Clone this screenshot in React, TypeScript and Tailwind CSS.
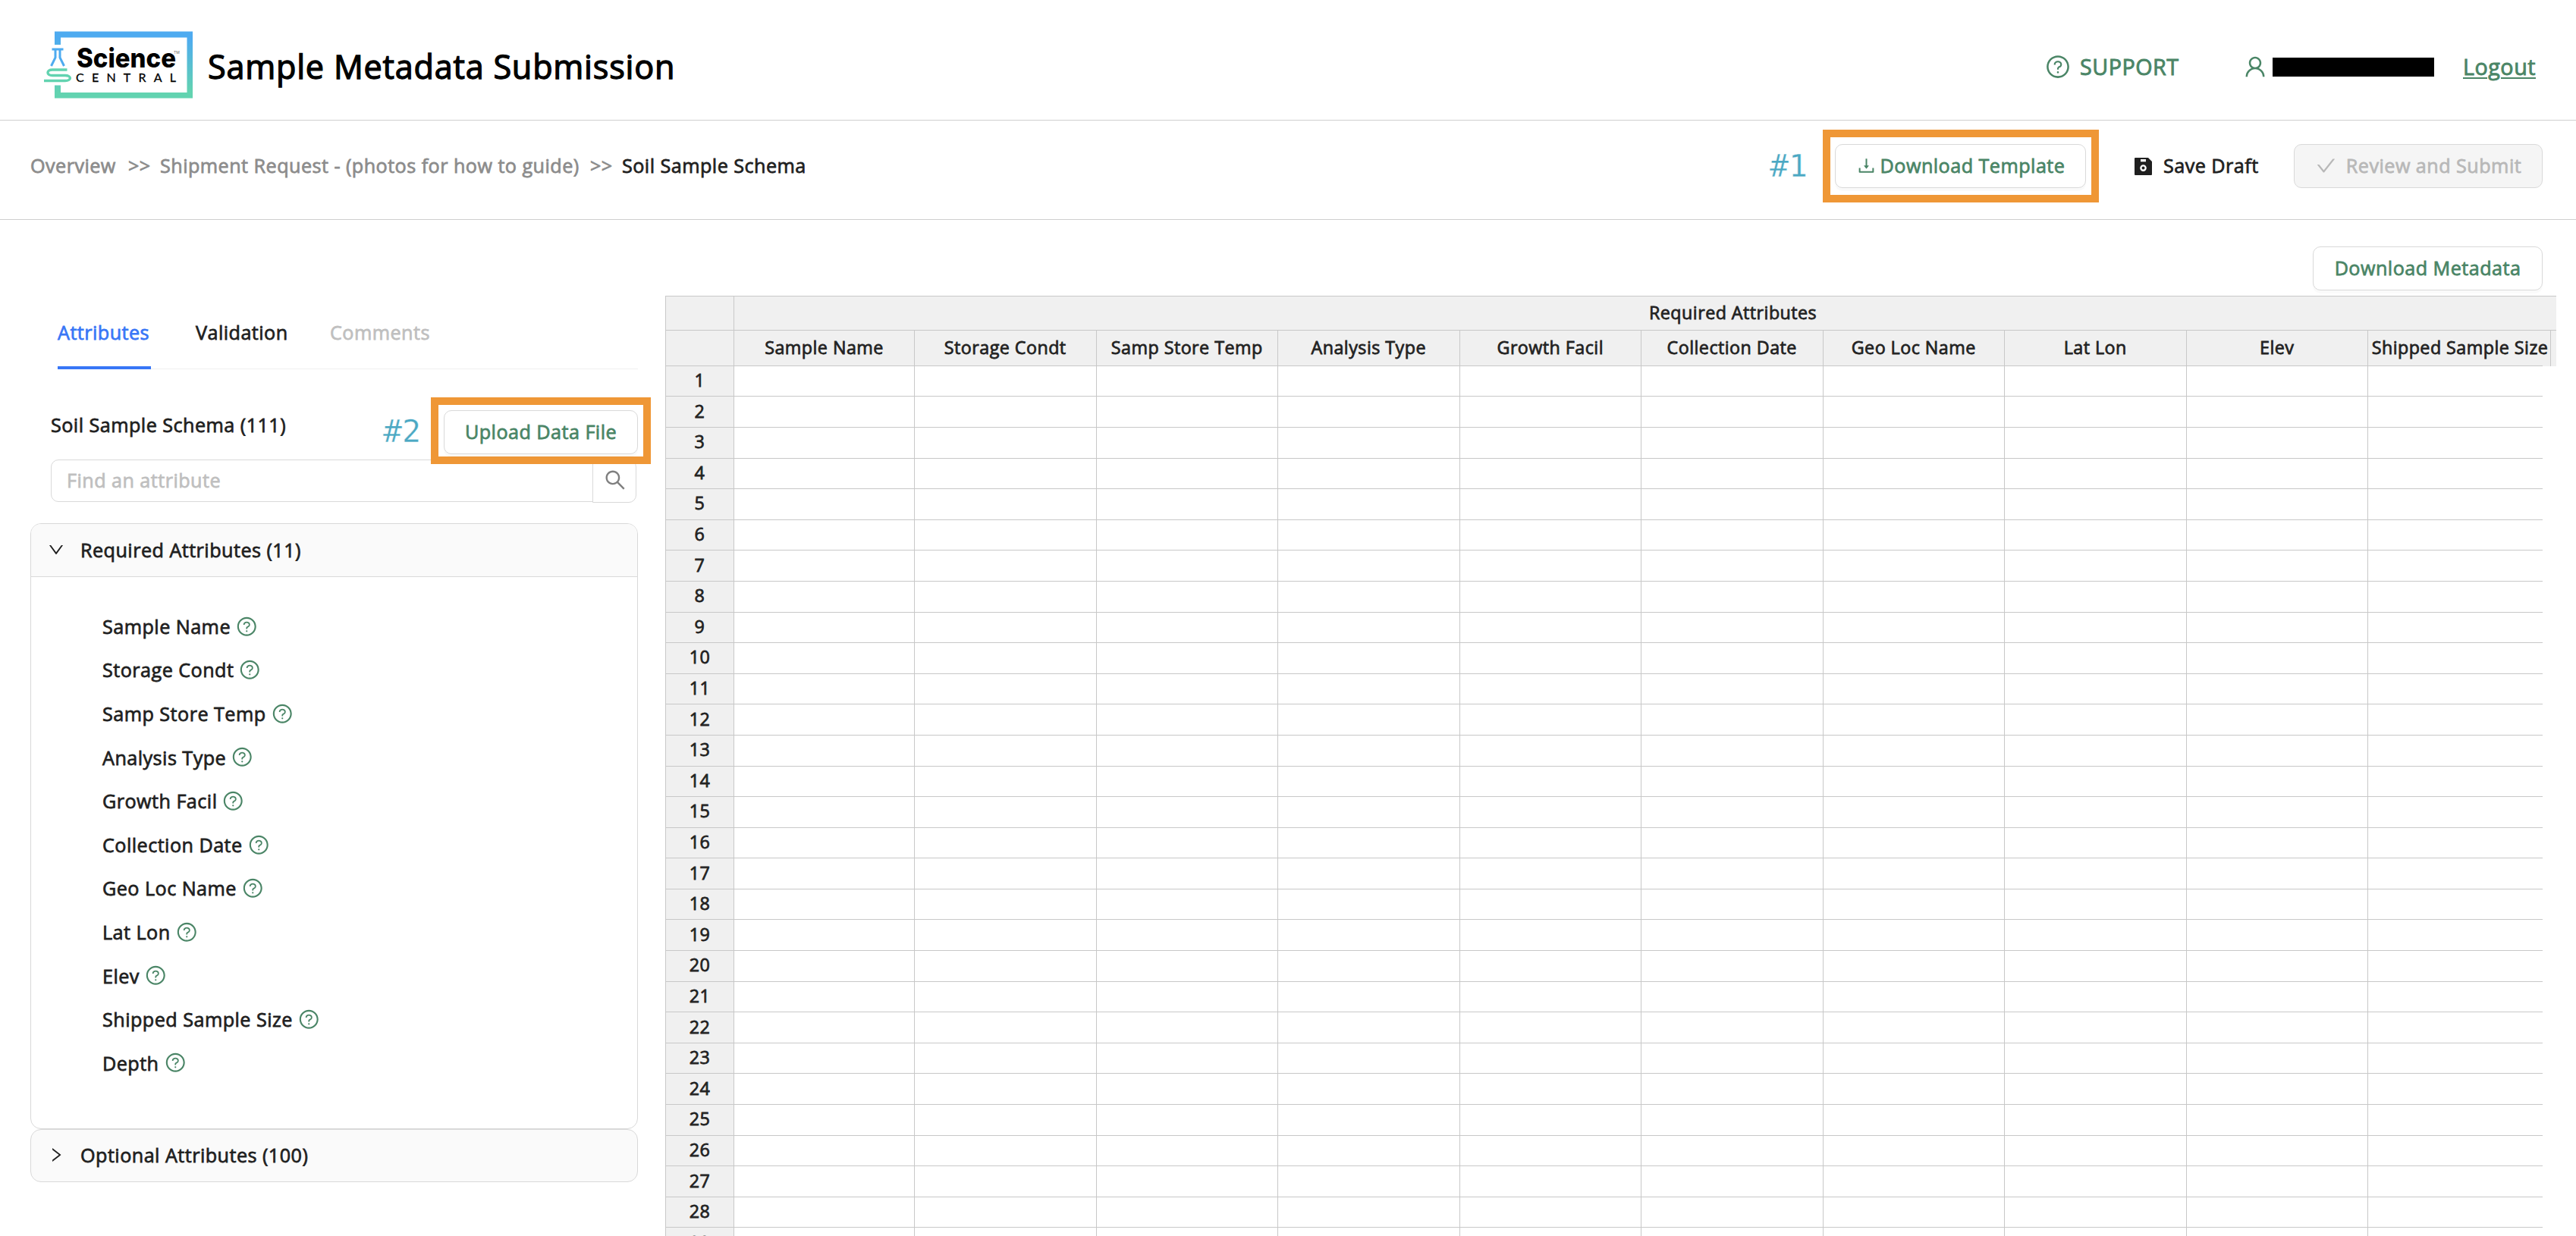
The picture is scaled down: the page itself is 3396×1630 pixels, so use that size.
import React from 'react';
import clsx from 'clsx';
import {
  AiOutlineCheck,
  AiOutlineDown,
  AiOutlineDownload,
  AiOutlineQuestionCircle,
  AiOutlineRight,
  AiOutlineSearch,
  AiOutlineUser,
} from 'react-icons/ai';

const requiredAttributes = [
  'Sample Name',
  'Storage Condt',
  'Samp Store Temp',
  'Analysis Type',
  'Growth Facil',
  'Collection Date',
  'Geo Loc Name',
  'Lat Lon',
  'Elev',
  'Shipped Sample Size',
  'Depth',
];

const columns = requiredAttributes.slice(0, 10);
const rows = Array.from({ length: 29 }, (_, i) => i + 1);

const columnWidth = (i: number) => (i === 0 ? 'w-[238px]' : 'w-[239.5px]');

// Open Sans has no medium cut here, so the regular one is thickened a little
const mediumText = 'font-normal tracking-[0.018em] [-webkit-text-stroke:0.03em]';

const Logo: React.FC = () => (
  <svg width="200" height="92" viewBox="56 40 200 92" className="block">
    <defs>
      <linearGradient id="frame" x1="0" y1="42" x2="0" y2="130" gradientUnits="userSpaceOnUse">
        <stop offset="0.1" stopColor="#4eabf0" />
        <stop offset="0.9" stopColor="#62d3b0" />
      </linearGradient>
    </defs>
    <path d="M72 59V41.5H254V129.500H72V112.500H80V122H246.500V49.500H80V59Z" fill="url(#frame)" />
    <path d="M68.500 65H83.500M73 66V76L67.500 87M79 66V76L84.500 87" fill="none" stroke="#4eabf0" strokeWidth="3" />
    <path
      d="M88.500 92H69C61 92 61 99.500 69 99.500H86C94.500 99.500 94.500 106.500 86 106.500H58"
      fill="none"
      stroke="#62d3b0"
      strokeWidth="3.400"
    />
    <text x="101" y="89" textLength="131" lengthAdjust="spacingAndGlyphs" fontFamily="Inter" fontWeight="800" fontSize="35">
      Science
    </text>
    <text x="229" y="71" fontFamily="Inter" fontSize="5" fill="#666">
      TM
    </text>
    <text x="100" y="107.500" textLength="132" fontFamily="Lato" fontSize="16" stroke="#000" strokeWidth="0.300">
      CENTRAL
    </text>
  </svg>
);

const SaveIcon: React.FC = () => (
  <svg width="23" height="23" viewBox="0 0 23 23" className="block">
    <path
      fillRule="evenodd"
      fill="#1f1f1f"
      d="M1 0H18L23 5V22a1 1 0 0 1-1 1H1a1 1 0 0 1-1-1V1a1 1 0 0 1 1-1ZM8 2V5.300H15V2ZM11.500 9.300a4.300 4.300 0 1 0 0 8.600a4.300 4.300 0 1 0 0-8.600ZM11.500 11.600a2 2 0 1 1 0 4a2 2 0 1 1 0-4Z"
    />
  </svg>
);

const StepLabel: React.FC<{ children: React.ReactNode }> = ({ children }) => (
  <span className="w-[50px] font-['DejaVu_Sans_Mono',monospace] text-[41.5px] leading-[58px] tracking-normal text-[#4ba8c3] [-webkit-text-stroke:0.4px_white]">
    {children}
  </span>
);

const Header: React.FC = () => (
  <header className="flex h-[159px] items-start justify-between border-b border-[#cfcfcf] pl-14 pr-[50px]">
    <div className="flex items-start pt-10">
      <Logo />
      <h1 className={clsx('ml-[18px] mt-[19px] text-[43.2px] leading-[58px] text-black', mediumText)}>Sample Metadata Submission</h1>
    </div>
    <div className={clsx('mt-[59px] flex h-[58px] items-center text-[28.7px] text-[#4a8566]', mediumText)}>
      <AiOutlineQuestionCircle size={34} />
      <span className="ml-[12px] w-[132px] whitespace-nowrap">SUPPORT</span>
      <AiOutlineUser size={34} className="ml-[82px]" />
      <div className="ml-[6px] mt-px h-[25px] w-[213px] bg-black" />
      <a className="ml-[38px] w-[99px] underline decoration-2 underline-offset-[3px]">Logout</a>
    </div>
  </header>
);

const buttonBase = 'flex h-[58px] shrink-0 items-center justify-center rounded-[10px] border whitespace-nowrap pb-[2px]';
const buttonGreen = 'border-[#d9d9d9] bg-white text-[#4a8566] shadow-[0_4px_0_rgba(0,0,0,0.02)]';

const Toolbar: React.FC = () => (
  <div className="flex h-[131px] items-start justify-between border-b border-[#cfcfcf] pl-10 pr-[44px] pt-[12px]">
    <nav className="flex h-[94px] items-center whitespace-nowrap text-[#8c8c8c]">
      <span className="w-[129px]">Overview</span>
      <span className="w-[42px]">&gt;&gt;</span>
      <span className="w-[567px]">Shipment Request - (photos for how to guide)</span>
      <span className="w-[42px]">&gt;&gt;</span>
      <span className="text-[#1f1f1f]">Soil Sample Schema</span>
    </nav>
    <div className="flex h-[96px] items-center">
      <StepLabel>#1</StepLabel>
      <div className="ml-[20px] flex h-[96px] w-[364px] items-center border-[10px] border-[#ef9736] pl-[6px]">
        <button className={clsx(buttonBase, buttonGreen, 'w-[331px]')}>
          <AiOutlineDownload size={27} className="mr-[5px]" />
          Download Template
        </button>
      </div>
      <div className="ml-[47px] flex items-center text-[#1f1f1f]">
        <SaveIcon />
        <span className="ml-[15px] w-[126px] whitespace-nowrap pb-[2px]">Save Draft</span>
      </div>
      <button className={clsx(buttonBase, 'ml-[46px] w-[328px] border-[#d9d9d9] bg-[#f5f5f5] text-[#b8b8b8]')}>
        <AiOutlineCheck size={29} className="mr-[12px]" />
        Review and Submit
      </button>
    </div>
  </div>
);

const Sidebar: React.FC = () => (
  <aside className="ml-10 w-[801px] shrink-0 text-[#1f1f1f]">
    <div className="ml-[36px] mt-[112px] flex h-[85px] items-start gap-[59px] border-b border-[#f0f0f0]">
      <div className="h-[85px] w-[123px] border-b-[4px] border-[#3876f6] pt-[18px] text-[#3876f6]">Attributes</div>
      <div className="w-[118px] pt-[18px]">Validation</div>
      <div className="pt-[18px] text-[#bfbfbf]">Comments</div>
    </div>

    <div className="relative z-10 mr-[-17px] mt-[37px] flex h-[88px] items-start">
      <span className="ml-[27px] mr-auto mt-[18px]">Soil Sample Schema (111)</span>
      <StepLabel>
        <span className="block pt-[16px]">#2</span>
      </StepLabel>
      <div className="ml-[13px] flex h-[88px] w-[290px] shrink-0 border-[10px] border-[#ef9736] bg-white pl-[7px] pt-[7px]">
        <button className={clsx(buttonBase, buttonGreen, 'w-[256px]')}>Upload Data File</button>
      </div>
    </div>

    <div className="ml-[27px] mr-[2px] mt-[-6px] flex h-[57px] text-[#bfbfbf]">
      <div className="flex h-[56px] flex-1 items-center rounded-l-[10px] border border-[#d9d9d9] pb-[2px] pl-[20px]">Find an attribute</div>
      <div className="ml-[-1px] flex w-[58px] items-center justify-center rounded-r-[10px] border border-[#d9d9d9] text-[#7f7f7f]">
        <AiOutlineSearch size={32} className="-mt-[4px] ml-px" />
      </div>
    </div>

    <section className="mt-[27px] h-[799px] rounded-[14px] border border-[#d9d9d9]">
      <div className="flex h-[70px] items-center rounded-t-[13px] border-b border-[#d9d9d9] bg-[#fafafa] pb-[2px] pl-[21px]">
        <AiOutlineDown size={24} />
        <span className="ml-[20px]">Required Attributes (11)</span>
      </div>
      <ul className="pl-[94px] pt-[36px]">
        {requiredAttributes.map((name) => (
          <li key={name} className="flex h-[57.6px] items-center">
            {name}
            <AiOutlineQuestionCircle size={28.5} className="ml-[7px] text-[#4a8566]" />
          </li>
        ))}
      </ul>
    </section>
    <section className="flex h-[70px] items-center rounded-[14px] border border-[#d9d9d9] bg-[#fafafa] pb-[2px] pl-[21px]">
      <AiOutlineRight size={24} />
      <span className="ml-[20px]">Optional Attributes (100)</span>
    </section>
  </aside>
);

const DataGrid: React.FC = () => (
  <div className="text-[23.3px] text-[#222]">
    <div className="flex h-[46.4px] w-[2493px] border-l border-t border-[#c8c8c8] bg-[#f0f0f0]">
      <div className="w-[90px] shrink-0 border-b border-r border-[#c8c8c8]" />
      <div className="flex flex-1 items-center border-b border-[#c8c8c8] pb-[2px] pl-[1206px]">Required Attributes</div>
    </div>
    <div className="flex h-[46.4px] w-[2493px] border-l border-[#c8c8c8] bg-[#f0f0f0]">
      <div className="w-[90px] shrink-0 border-b border-r border-[#c8c8c8]" />
      {columns.map((name, i) => (
        <div
          key={name}
          className={clsx(
            'relative flex shrink-0 items-center justify-center whitespace-nowrap border-r border-[#c8c8c8]',
            i === 9 ? 'w-[241px] pb-[4px] pl-[2px]' : clsx(columnWidth(i), 'border-b pb-[3px]'),
          )}
        >
          {name}
          {/* the last header overhangs the grid body, its rule stops with the body */}
          {i === 9 && <span className="absolute bottom-0 left-0 h-px w-[230px] bg-[#c8c8c8]" />}
        </div>
      ))}
    </div>
    {rows.map((n) => (
      <div key={n} className="flex h-[40.594px] w-[2475px] border-l border-[#c8c8c8]">
        <div className="flex w-[90px] shrink-0 items-center justify-center border-b border-r border-[#c8c8c8] bg-[#f0f0f0] pb-[3px]">
          {n}
        </div>
        {columns.map((name, i) => (
          <div
            key={name}
            className={clsx('border-b border-[#c8c8c8]', i === 9 ? 'flex-1' : clsx(columnWidth(i), 'shrink-0 border-r'))}
          />
        ))}
      </div>
    ))}
  </div>
);

const App: React.FC = () => {
  return (
    <div className="h-[1630px] w-[3396px] overflow-hidden bg-white font-['Open_Sans',sans-serif] text-[25.2px] leading-[36px]">
      <Header />
      <div className={mediumText}>
        <Toolbar />
        <div className="flex">
          <Sidebar />
          <div className="ml-[36px] flex-1">
            <div className="flex h-[100px] justify-end pr-[44px] pt-[35px]">
              <button className={clsx(buttonBase, buttonGreen, 'w-[303px]')}>Download Metadata</button>
            </div>
            <DataGrid />
          </div>
        </div>
      </div>
    </div>
  );
};

export default App;
